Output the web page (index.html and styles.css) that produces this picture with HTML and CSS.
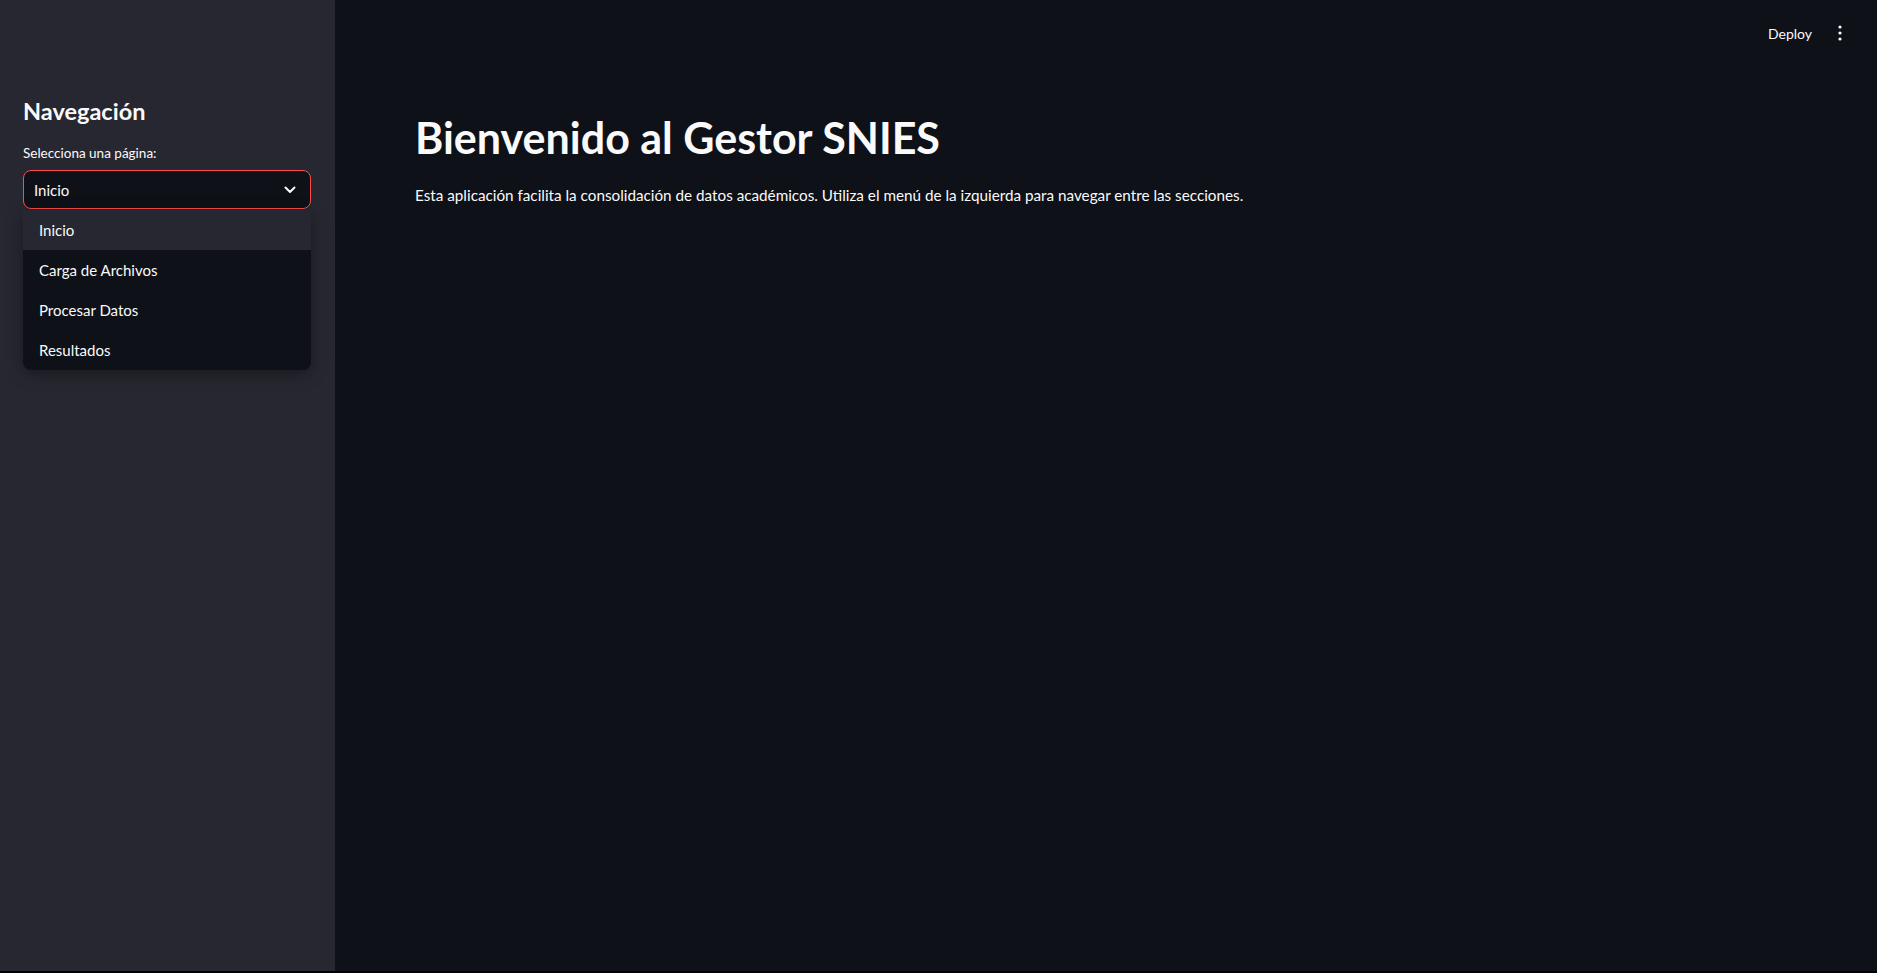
FILE: index.html
```html
<!DOCTYPE html>
<html lang="es">
<head>
<meta charset="utf-8">
<title>Gestor SNIES</title>
<link rel="stylesheet" href="styles.css">
</head>
<body>
<div class="app">
  <aside class="sidebar">
    <h2 class="side-title">Navegación</h2>
    <label class="side-label">Selecciona una página:</label>
    <div class="select-wrap">
      <div class="select">
        <span class="select-value">Inicio</span>
        <svg class="chevron" width="12" height="8" viewBox="0 0 12 8"><path d="M1.5 1.5 L6 6 L10.5 1.5" fill="none" stroke="#fafafa" stroke-width="2" stroke-linecap="round" stroke-linejoin="round"/></svg>
      </div>
      <ul class="menu">
        <li class="menu-item active">Inicio</li>
        <li class="menu-item">Carga de Archivos</li>
        <li class="menu-item">Procesar Datos</li>
        <li class="menu-item">Resultados</li>
      </ul>
    </div>
  </aside>
  <main class="main">
    <header class="topbar">
      <span class="deploy">Deploy</span>
      <svg class="kebab" width="6" height="16" viewBox="0 0 6 16"><circle cx="3" cy="2" r="1.6" fill="#fafafa"/><circle cx="3" cy="8" r="1.6" fill="#fafafa"/><circle cx="3" cy="14" r="1.6" fill="#fafafa"/></svg>
    </header>
    <section class="content">
      <h1 class="title">Bienvenido al Gestor SNIES</h1>
      <p class="lead">Esta aplicación facilita la consolidación de datos académicos. Utiliza el menú de la izquierda para navegar entre las secciones.</p>
    </section>
  </main>
</div>
</body>
</html>
```
FILE: styles.css
```css
html, body { margin: 0; padding: 0; background: #000; }
body { font-family: "Lato", "Noto Sans", sans-serif; color: #fafafa; }
.app { display: flex; height: calc(100vh - 2px); }
.sidebar { width: 335px; flex: none; background: #262730; box-sizing: border-box; padding: 97px 24px 0 23px; }
.side-title { margin: 0; font-size: 23.5px; font-weight: 700; line-height: 1.2; }
.side-label { display: block; margin-top: 19px; font-size: 13.5px; line-height: 18px; }
.select-wrap { position: relative; margin-top: 8px; }
.select { height: 39px; box-sizing: border-box; border: 1px solid #ff4b4b; border-radius: 8px; background: #0e1117; display: flex; align-items: center; justify-content: space-between; padding: 0 14px 0 10px; font-size: 15px; }
.chevron { display: block; }
.menu { position: absolute; left: 0; right: 0; top: 40px; margin: 0; padding: 0; list-style: none; background: #0e1117; border-radius: 0 0 8px 8px; box-shadow: 0 4px 16px rgba(0,0,0,0.35); overflow: hidden; }
.menu-item { height: 40px; display: flex; align-items: center; padding-left: 16px; font-size: 15px; }
.menu-item.active { background: #262730; }
.main { flex: 1; background: #0e1117; display: flex; flex-direction: column; }
.topbar { height: 60px; padding-top: 6px; box-sizing: border-box; display: flex; align-items: center; justify-content: flex-end; gap: 25px; padding-right: 34px; }
.deploy { font-size: 14px; }
.kebab { display: block; }
.content { padding: 52px 80px 0 80px; }
.title { margin: 0; font-size: 43px; font-weight: 700; line-height: 1.2; }
.lead { margin: 19px 0 0; font-size: 15.25px; line-height: 24px; }
```
